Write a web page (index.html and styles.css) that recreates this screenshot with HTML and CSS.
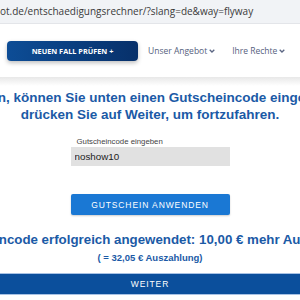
FILE: index.html
```html
<!DOCTYPE html>
<html lang="de">
<head>
    <meta charset="UTF-8">
    <meta name="viewport" content="width=device-width, initial-scale=1.0">
    <title>Entschädigungsrechner</title>
    <link rel="stylesheet" href="styles.css">
</head>
<body>

    <!-- Address bar -->
    <div class="urlbar">ot.de/entschaedigungsrechner/?slang=de&amp;way=flyway</div>

    <!-- Top navigation -->
    <div class="topnav">
        <a href="#" class="case-btn">NEUEN FALL PRÜFEN +</a>
        <a href="#" class="nav-link">Unser Angebot
            <svg class="caret" width="6" height="4" viewBox="0 0 6 4"><path d="M0.7 0.7 L3 3 L5.3 0.7" fill="none" stroke="#5b6683" stroke-width="1.3"/></svg>
        </a>
        <a href="#" class="nav-link">Ihre Rechte
            <svg class="caret" width="6" height="4" viewBox="0 0 6 4"><path d="M0.7 0.7 L3 3 L5.3 0.7" fill="none" stroke="#5b6683" stroke-width="1.3"/></svg>
        </a>
    </div>
    <div class="shade"></div>

    <!-- Voucher -->
    <div class="voucher">
        <h1 class="title">
            <span>Sie haben, können Sie unten einen Gutscheincode eingeben und</span>
            <span>drücken Sie auf Weiter, um fortzufahren.</span>
        </h1>

        <div class="field">
            <label for="code">Gutscheincode eingeben</label>
            <input type="text" id="code" value="noshow10">
        </div>

        <button class="apply-btn">GUTSCHEIN ANWENDEN</button>

        <p class="success">Gutscheincode erfolgreich angewendet: 10,00 € mehr Auszahlung</p>
        <p class="payout">( = 32,05 € Auszahlung)</p>
    </div>

    <button class="next-btn">WEITER</button>

</body>
</html>
```

FILE: styles.css
```css
/* General */
body {
    margin: 0;
    background-color: white;
    font-family: "Liberation Sans", Arial, sans-serif;
    overflow: hidden;
}

/* Address bar */
.urlbar {
    height: 23px;
    line-height: 22px;
    background-color: #f1f3f6;
    border-bottom: 1px solid #e3e5e9;
    font-family: "Open Sans", sans-serif;
    font-size: 10px;
    color: #3a3a3a;
    white-space: nowrap;
    overflow: hidden;
}

/* Top navigation */
.topnav {
    height: 53px;
    display: flex;
    align-items: center;
    padding-left: 7px;
    font-family: "Open Sans", sans-serif;
    white-space: nowrap;
}

.case-btn {
    flex-shrink: 0;
    width: 131px;
    height: 20px;
    line-height: 20px;
    text-align: center;
    border-radius: 4px;
    background: linear-gradient(to right, #0d4d96, #07306a);
    box-shadow: 0 2px 4px rgba(0, 0, 0, 0.25);
    color: white;
    font-size: 7.3px;
    font-weight: bold;
    text-decoration: none;
    margin-right: 10px;
}

.nav-link {
    flex-shrink: 0;
    display: flex;
    align-items: center;
    gap: 2px;
    color: #56617e;
    font-size: 8.5px;
    text-decoration: none;
    margin-right: 17px;
}

.caret {
    margin-top: 1px;
}

.shade {
    height: 9px;
    background: linear-gradient(#e8e8e8, #ffffff);
}

/* Voucher */
.voucher {
    display: flex;
    flex-direction: column;
    align-items: center;
}

.title {
    display: flex;
    flex-direction: column;
    align-items: center;
    margin: 3px 0 0;
    font-size: 13.5px;
    line-height: 17px;
    color: #1b5aa6;
    white-space: nowrap;
}

.field {
    display: flex;
    flex-direction: column;
    margin-top: 13px;
}

.field label {
    font-size: 7.8px;
    line-height: 11px;
    color: #444;
    padding-left: 6px;
}

.field input {
    width: 159px;
    height: 19px;
    box-sizing: border-box;
    border: none;
    background-color: #e1e1e1;
    padding: 0 4px;
    font-family: "Liberation Sans", Arial, sans-serif;
    font-size: 9.8px;
    color: #222;
}

.apply-btn {
    width: 159px;
    height: 21px;
    margin-top: 28px;
    border: none;
    border-radius: 2px;
    background-color: #1a78d4;
    box-shadow: 0 1px 2px rgba(0, 0, 0, 0.2);
    color: white;
    font-family: "Liberation Sans", Arial, sans-serif;
    font-size: 8.5px;
    letter-spacing: 0.9px;
    cursor: pointer;
}

.success {
    margin: 16px 0 0;
    font-size: 13.3px;
    line-height: 17px;
    font-weight: bold;
    color: #1b5aa6;
    white-space: nowrap;
}

.payout {
    margin: 4px 0 0;
    font-size: 9.5px;
    line-height: 12px;
    font-weight: bold;
    color: #1b5aa6;
}

.next-btn {
    display: block;
    width: 100%;
    height: 22px;
    margin-top: 9px;
    border: none;
    border-top: 1px solid #a8c2e4;
    border-bottom: 1px solid #a8c2e4;
    background-color: #0b4f9c;
    color: white;
    font-family: "Liberation Sans", Arial, sans-serif;
    font-size: 8.5px;
    letter-spacing: 0.9px;
    cursor: pointer;
}
```
